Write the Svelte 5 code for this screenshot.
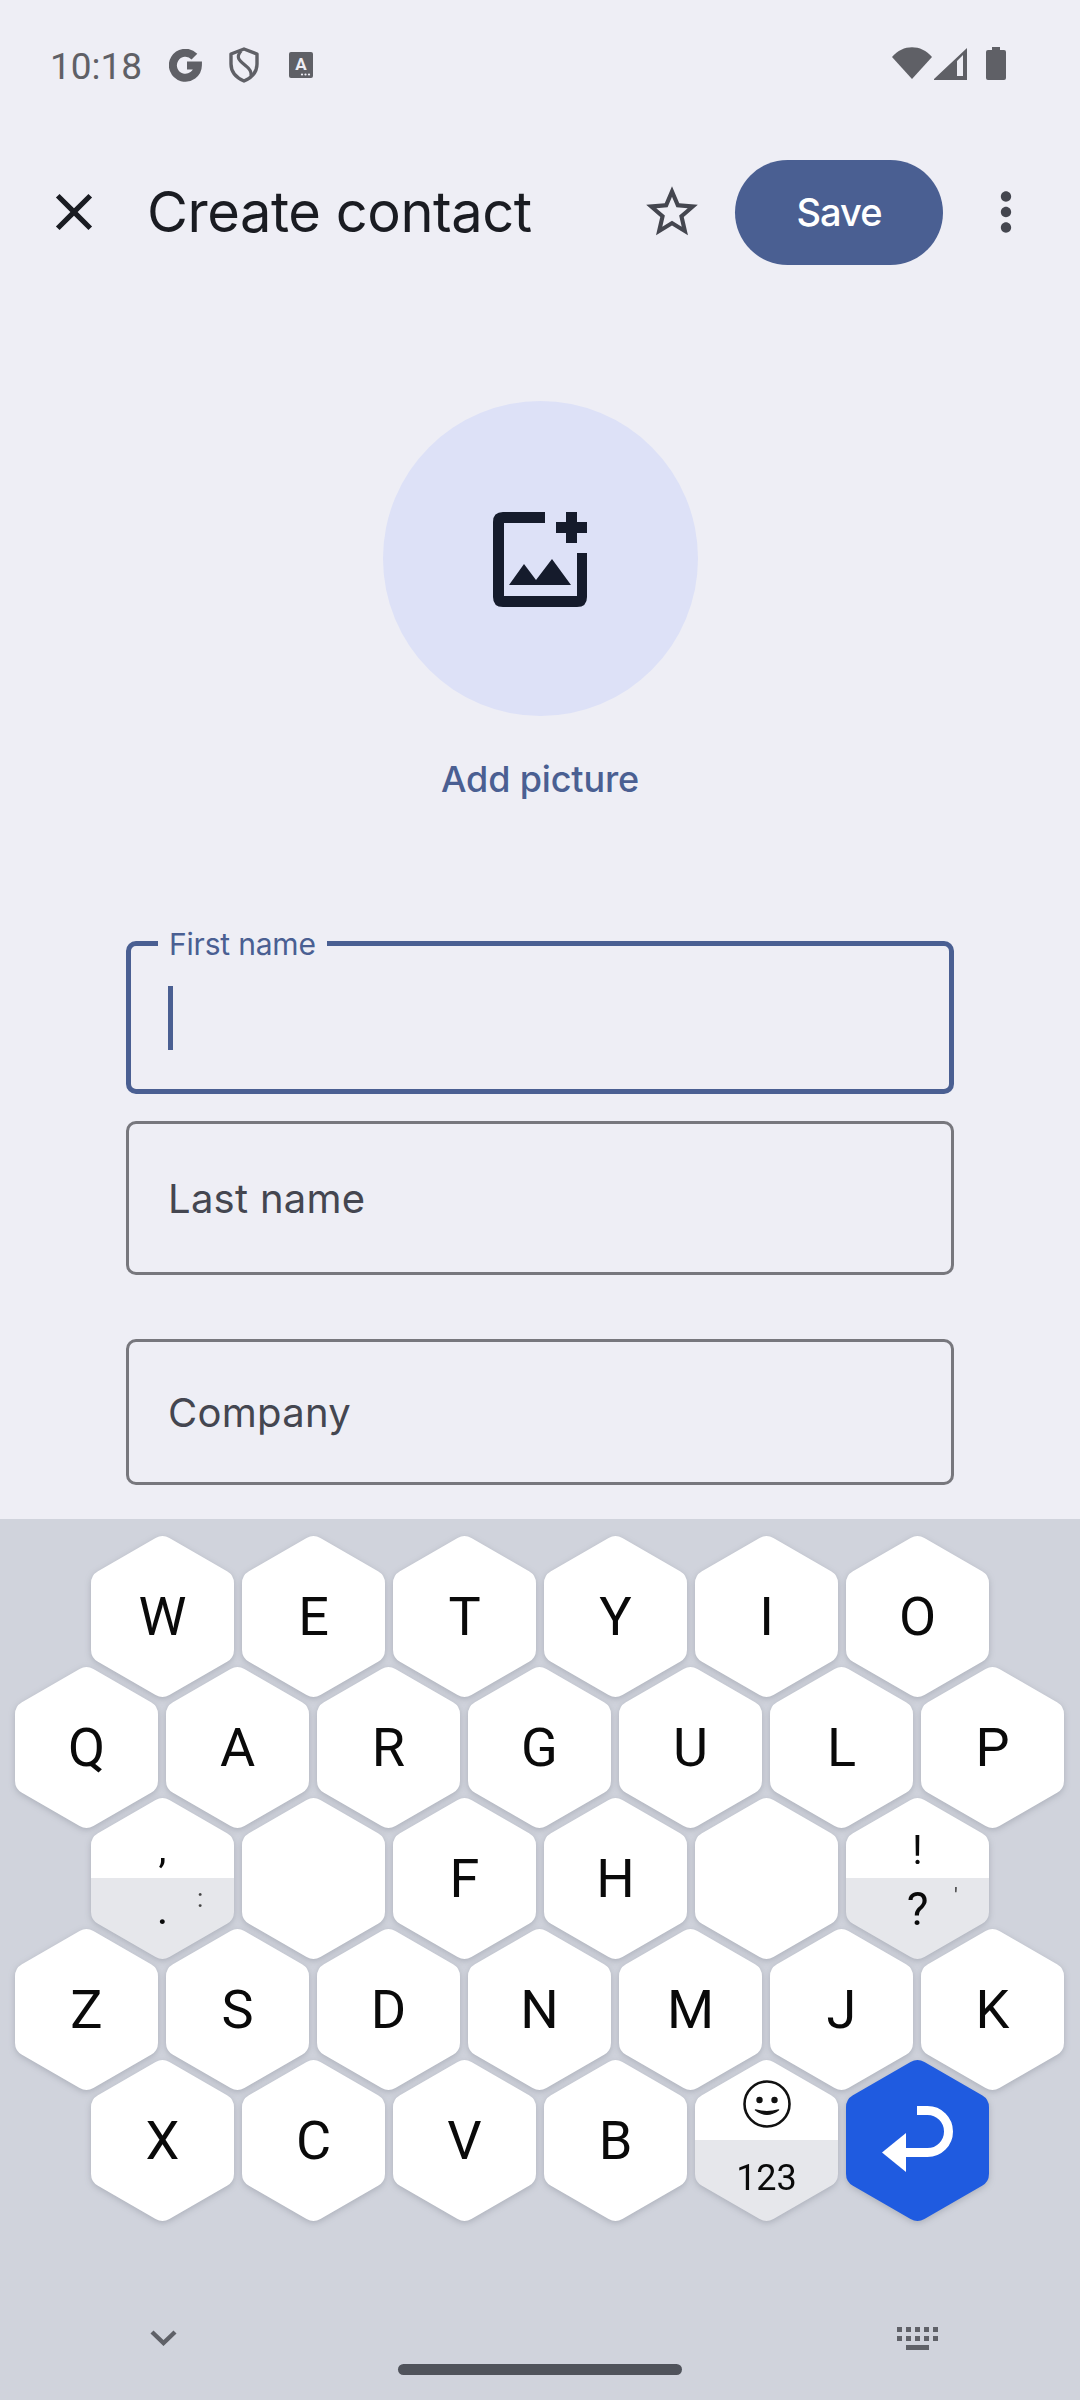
<script>
  const rows = [
    { offset: false, keys: ['W', 'E', 'T', 'Y', 'I', 'O'] },
    { offset: true, keys: ['Q', 'A', 'R', 'G', 'U', 'L', 'P'] },
    { offset: false, keys: ['comma', '', 'F', 'H', '', 'bang'] },
    { offset: true, keys: ['Z', 'S', 'D', 'N', 'M', 'J', 'K'] },
    { offset: false, keys: ['X', 'C', 'V', 'B', 'emoji', 'enter'] }
  ];
  const split = ['comma', 'bang', 'emoji'];
  const squares = [0, 1, 2, 3, 4];
</script>

<div class="page">
  <div class="status">
    <span class="time">10:18</span>
    <svg class="i-g" width="33" height="33" viewBox="0 0 33 33">
      <path d="M25.4 7.6A12.5 12.5 0 1 0 28.9 16.5H18" fill="none" stroke="#5f6066" stroke-width="8" />
    </svg>
    <svg class="i-shield" width="30" height="36" viewBox="0 0 30 36">
      <path d="M15 2 L28 7 V17 C28 26 22 31 15 34 C8 31 2 26 2 17 V7 Z" fill="none" stroke="#5f6066" stroke-width="3.4" stroke-linejoin="round" />
      <path d="M12 4 C6 11 11 14 17 19 C21 22 23 25 22 29" fill="none" stroke="#5f6066" stroke-width="3.2" />
    </svg>
    <svg class="i-a" width="24" height="26" viewBox="0 0 24 26">
      <rect width="24" height="26" rx="2" fill="#5f6066" />
      <text x="12" y="18" text-anchor="middle" class="mini-a">A</text>
      <circle cx="13" cy="22.5" r="1.1" fill="#eeeef5" /><circle cx="16.5" cy="22.5" r="1.1" fill="#eeeef5" /><circle cx="20" cy="22.5" r="1.1" fill="#eeeef5" />
    </svg>
    <span class="spacer"></span>
    <svg class="i-wifi" width="40" height="32" viewBox="0 0 40 32">
      <path d="M0 10 C11 -3 29 -3 40 10 L20 32 Z" fill="#5f6066" />
    </svg>
    <svg class="i-signal" width="33" height="32" viewBox="0 0 33 32">
      <path fill-rule="evenodd" d="M0 31 L33 0 V32 H0 Z M23 13 V28 H29 V7 Z" fill="#5f6066" />
    </svg>
    <svg class="i-batt" width="20" height="33" viewBox="0 0 20 33">
      <path d="M6 0 H14 V3 H18 Q20 3 20 5 V31 Q20 33 18 33 H2 Q0 33 0 31 V5 Q0 3 2 3 H6 Z" fill="#5f6066" />
    </svg>
  </div>

  <div class="toolbar">
    <svg class="tb-icon" viewBox="0 0 24 24"><path fill="#1a1c22" d="M19 6.41L17.59 5 12 10.59 6.41 5 5 6.41 10.59 12 5 17.59 6.41 19 12 13.41 17.59 19 19 17.59 13.41 12z" /></svg>
    <h1 class="title">Create contact</h1>
    <svg class="tb-icon" viewBox="0 0 24 24"><path fill="#44464f" d="M22 9.24l-7.19-.62L12 2 9.19 8.63 2 9.24l5.46 4.73L5.82 21 12 17.27 18.18 21l-1.63-7.03L22 9.24zM12 15.4l-3.76 2.27 1-4.28-3.32-2.88 4.38-.38L12 6.1l1.71 4.04 4.38.38-3.32 2.88 1 4.28L12 15.4z" /></svg>
    <button class="save">Save</button>
    <svg class="tb-icon" viewBox="0 0 24 24"><path fill="#44464f" d="M12 8c1.1 0 2-.9 2-2s-.9-2-2-2-2 .9-2 2 .9 2 2 2zm0 2c-1.1 0-2 .9-2 2s.9 2 2 2 2-.9 2-2-.9-2-2-2zm0 6c-1.1 0-2 .9-2 2s.9 2 2 2 2-.9 2-2-.9-2-2-2z" /></svg>
  </div>

  <div class="photo">
    <div class="circle">
      <svg width="94" height="95" viewBox="0 0 94 95" fill="#151b2c">
        <path d="M52 0 H10 Q0 0 0 10 V85 Q0 95 10 95 H84 Q94 95 94 85 V41 H84 V84 H11 V11 H52 Z" />
        <path d="M73 0 H84 V10 H94 V21 H84 V31 H73 V21 H63 V10 H73 Z" />
        <path d="M16 73 L31 52 L43 68 L59 47 L78 73 Z" />
      </svg>
    </div>
    <span class="add">Add picture</span>
  </div>

  <div class="form">
    <div class="field focused">
      <span class="float">First name</span>
      <span class="caret"></span>
    </div>
    <div class="field last"><span class="ph">Last name</span></div>
    <div class="field company"><span class="ph">Company</span></div>
  </div>

  <div class="keyboard">
    <div class="rows">
      {#each rows as row}
        <div class="row" class:offset={row.offset}>
          {#each row.keys as k}
            <div class="key">
              <div class="hex" class:split={split.includes(k)} class:enter={k === 'enter'}>
                {#if k === 'comma'}
                  <span class="half up comma">,</span>
                  <span class="half down dot">.</span>
                  <span class="hint colon">:</span>
                {:else if k === 'bang'}
                  <span class="half up bang">!</span>
                  <span class="half down quest">?</span>
                  <span class="hint apos">'</span>
                {:else if k === 'emoji'}
                  <span class="half up smile">
                    <svg width="48" height="48" viewBox="0 0 48 48">
                      <circle cx="24" cy="24" r="22.5" fill="none" stroke="#111" stroke-width="2.6" />
                      <circle cx="16.5" cy="20" r="3.2" fill="#111" /><circle cx="31.5" cy="20" r="3.2" fill="#111" />
                      <path d="M12.5 30 Q24 38.5 35.5 30 Q24 33.5 12.5 30 Z" fill="#111" stroke="#111" stroke-width="1.5" stroke-linejoin="round" />
                    </svg>
                  </span>
                  <span class="half down num">123</span>
                {:else if k === 'enter'}
                  <svg width="143" height="163" viewBox="0 0 143 163">
                    <path d="M71 51.5 H81.5 A21 21 0 0 1 81.5 93.5 H58" fill="none" stroke="#fff" stroke-width="9" />
                    <path d="M60 74 L36 93.5 L60 113 Z" fill="#fff" />
                  </svg>
                {:else}
                  <span class="letter">{k}</span>
                {/if}
              </div>
            </div>
          {/each}
        </div>
      {/each}
    </div>
    <div class="tools">
      <svg width="27" height="16" viewBox="0 0 27 16"><path d="M2 2 L13.5 13 L25 2" fill="none" stroke="#5f6168" stroke-width="4.4" /></svg>
      <div class="kb-icon">
        <div class="kb-row">{#each squares as s}<i></i>{/each}</div>
        <div class="kb-row">{#each squares as s}<i></i>{/each}</div>
        <b></b>
      </div>
    </div>
    <div class="handle"></div>
  </div>
</div>

<style>
  :global(body) { margin: 0; background: #eeeef5; }
  .page { width: 1080px; height: 2400px; display: flex; flex-direction: column; background: #eeeef5; font-family: Roboto, sans-serif; overflow: hidden; }

  .status { height: 130px; box-sizing: border-box; display: flex; align-items: center; padding: 0 74px 0 50px; }
  .time { font: 400 37px/1 Roboto, sans-serif; color: #5f6066; width: 119px; padding-top: 2px; }
  .i-g { margin-right: 27px; }
  .i-shield { margin-right: 30px; }
  .mini-a { font: 700 17px Roboto, sans-serif; fill: #eeeef5; }
  .spacer { flex: 1; }
  .i-wifi { margin-bottom: 4px; }
  .i-signal { margin: 0 19px 3px 2px; }
  .i-batt { margin-bottom: 3px; }

  .toolbar { height: 164px; display: flex; align-items: center; padding: 0 43px; }
  .tb-icon { width: 62px; height: 62px; flex: none; }
  .title { flex: 1; margin: 0 0 0 42px; font: 400 56px/1 Inter, sans-serif; letter-spacing: -0.45px; color: #1a1c22; }
  .save { width: 208px; height: 105px; margin: 0 32px; border: 0; border-radius: 53px; background: #4a5f92; color: #fff; font: 500 38px/1 Inter, sans-serif; letter-spacing: -1px; }

  .photo { display: flex; flex-direction: column; align-items: center; margin-top: 107px; }
  .circle { width: 315px; height: 315px; border-radius: 50%; background: #dde1f7; display: flex; align-items: center; justify-content: center; padding-top: 2px; box-sizing: border-box; }
  .add { margin-top: 41px; font: 500 36px/44px Inter, sans-serif; letter-spacing: -0.15px; color: #4a5f92; }

  .form { display: flex; flex-direction: column; margin: 0 126px 34px; padding-top: 140px; }
  .field { position: relative; box-sizing: border-box; height: 154px; border: 3px solid #77777d; border-radius: 10px; display: flex; align-items: center; padding-left: 39px; }
  .focused { height: 153px; border: 5px solid #4a5f92; padding-left: 37px; }
  .last { margin-top: 27px; }
  .company { margin-top: 64px; height: 146px; }
  .float { position: absolute; left: 27px; top: -20px; padding: 0 11px; background: #eeeef5; font: 400 30px/36px Inter, sans-serif; letter-spacing: -0.2px; color: #4a5f92; }
  .caret { width: 5px; height: 64px; background: #4a5f92; }
  .ph { font: 400 40px/48px Inter, sans-serif; letter-spacing: 0.27px; color: #444650; padding-top: 1px; }

  .keyboard { flex: 1; background: #d0d3dc; padding-top: 16px; display: flex; flex-direction: column; }
  .rows { display: flex; flex-direction: column; }
  .row { display: flex; gap: 8px; margin-left: 91px; height: 163px; }
  .row + .row { margin-top: -32px; }
  .row.offset { margin-left: 15px; }
  .key { width: 143px; height: 163px; filter: drop-shadow(0 2px 3px rgba(90, 96, 110, 0.3)); }
  .hex {
    position: relative;
    width: 143px; height: 163px;
    display: flex; align-items: center; justify-content: center;
    background: #fff;
    clip-path: path('M64.57 3 Q71.5 -1.1 78.43 3 L136.07 36.2 Q143 40.2 143 48.2 L143 114.8 Q143 122.8 136.07 126.8 L78.43 160 Q71.5 164.1 64.57 160 L6.93 126.8 Q0 122.8 0 114.8 L0 48.2 Q0 40.2 6.93 36.2 Z');
  }
  .hex.split { flex-direction: column; background: linear-gradient(#fff 50%, #e6e7eb 50%); }
  .hex.enter { background: #1f5be0; }
  .letter { font: 400 54px/1 Roboto, sans-serif; color: #0a0a0a; }
  .half { height: 50%; width: 100%; box-sizing: border-box; display: flex; justify-content: center; align-items: center; color: #0a0a0a; font-family: Roboto, sans-serif; }
  .comma { font-size: 40px; line-height: 1; padding-top: 22px; }
  .dot { font-size: 44px; line-height: 1; padding-bottom: 20px; }
  .bang { font-size: 40px; line-height: 1; padding-top: 26px; }
  .quest { font-size: 46px; line-height: 1; padding-bottom: 20px; }
  .smile { padding-top: 8px; }
  .num { font-size: 36px; line-height: 1; padding-bottom: 6px; }
  .hint { position: absolute; color: #444; font-family: Roboto, sans-serif; font-size: 26px; line-height: 1; }
  .colon { left: 106px; top: 88px; }
  .apos { left: 108px; top: 88px; font-size: 22px; }

  .tools { display: flex; justify-content: space-between; align-items: center; margin-top: 104px; padding: 0 142px 0 150px; height: 24px; }
  .kb-icon { display: flex; flex-direction: column; gap: 4px; align-items: center; width: 41px; }
  .kb-row { display: flex; gap: 4px; }
  .kb-row i { width: 5px; height: 5px; background: #5f6168; }
  .kb-icon b { width: 23px; height: 5px; background: #5f6168; }
  .handle { align-self: center; width: 284px; height: 11px; margin-top: 14px; border-radius: 6px; background: #50535b; }
</style>
